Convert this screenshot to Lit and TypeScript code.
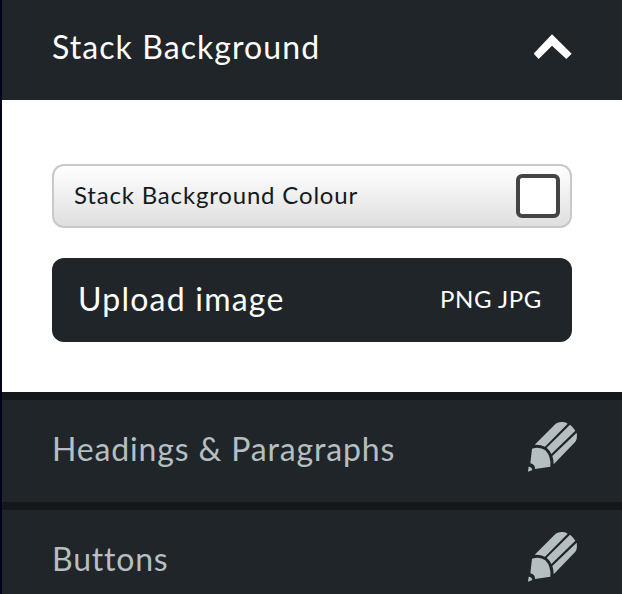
import { LitElement, html, css } from "lit";
import { customElement } from "lit/decorators.js";

const pencil = html`<svg class="pencil" viewBox="51 33 153 153" aria-hidden="true">
  <path d="M74 104L137 41Q145 35 158 36Q168 37 173 41L105 110Q91 103 74 104Z" />
  <path d="M110 113L180 44Q190 51 196 62L124 132Q119 121 110 113Z" />
  <path d="M127 138L200 68Q203 85 196 95L131 163Q131 149 127 138Z" />
  <path d="M66 116Q90 109 106 121Q124 140 121 170L75 177Q76 164 61 160Z" />
  <path d="M56 170Q66 171 67 180L54 185Z" />
</svg>`;

@customElement("app-root")
export class AppRoot extends LitElement {
  static styles = css`
    :host {
      display: block;
      box-sizing: border-box;
      width: 622px;
      height: 594px;
      overflow: hidden;
      border-left: 2px solid #02031a;
      background: #fff;
      font-family: Lato, "Noto Sans", sans-serif;
      font-size: 32px;
      line-height: 40px;
      white-space: nowrap;
    }
    .header,
    .row {
      display: flex;
      justify-content: space-between;
      box-sizing: border-box;
      background: #202529;
      padding-left: 50px;
    }
    .header {
      height: 100px;
      padding-top: 27px;
      padding-right: 50px;
      color: #fff;
    }
    .title { letter-spacing: 1.07px; }
    .chevron {
      width: 38px;
      height: 26px;
      margin-top: 7px;
      fill: #fff;
    }
    .panel {
      box-sizing: border-box;
      height: 292px;
      padding: 64px 50px 0;
      display: flex;
      flex-direction: column;
      gap: 30px;
    }
    .colour,
    .upload {
      display: flex;
      align-items: center;
      justify-content: space-between;
      box-sizing: border-box;
    }
    .colour {
      height: 64px;
      padding: 0 10px 0 20px;
      border: 2px solid #c9c9c9;
      border-radius: 12px;
      background: linear-gradient(#fff, #dfdfdf);
      color: #14191c;
      font-size: 24px;
    }
    .colour-label {
      padding-bottom: 2px;
      letter-spacing: 0.82px;
    }
    .swatch {
      box-sizing: border-box;
      width: 44px;
      height: 44px;
      border: 4px solid #444;
      border-radius: 6px;
      background: #fff;
    }
    .upload {
      height: 84px;
      padding: 0 30px 2px 26px;
      border-radius: 12px;
      background: #202529;
      color: #fff;
    }
    .upload-label { letter-spacing: 1.22px; }
    .formats { font-size: 24px; letter-spacing: 0.6px; }
    .row {
      height: 110px;
      border-top: 8px solid #14181b;
      padding-top: 29px;
      padding-right: 44px;
      color: #b5bfc1;
    }
    .headings { letter-spacing: 0.85px; }
    .buttons { letter-spacing: 0.8px; }
    .pencil {
      width: 51px;
      height: 51px;
      margin-top: -8px;
      fill: #b5bfc1;
    }
  `;

  render() {
    return html`
      <div class="header">
        <span class="title">Stack Background</span>
        <svg class="chevron" viewBox="44 42 114 78" aria-hidden="true">
          <path d="M98 43L157 101L141 117L98 77L58 117L43 101Z" />
        </svg>
      </div>
      <div class="panel">
        <div class="colour">
          <span class="colour-label">Stack Background Colour</span>
          <span class="swatch"></span>
        </div>
        <div class="upload">
          <span class="upload-label">Upload image</span>
          <span class="formats">PNG JPG</span>
        </div>
      </div>
      <div class="row">
        <span class="headings">Headings &amp; Paragraphs</span>${pencil}
      </div>
      <div class="row">
        <span class="buttons">Buttons</span>${pencil}
      </div>
    `;
  }
}
